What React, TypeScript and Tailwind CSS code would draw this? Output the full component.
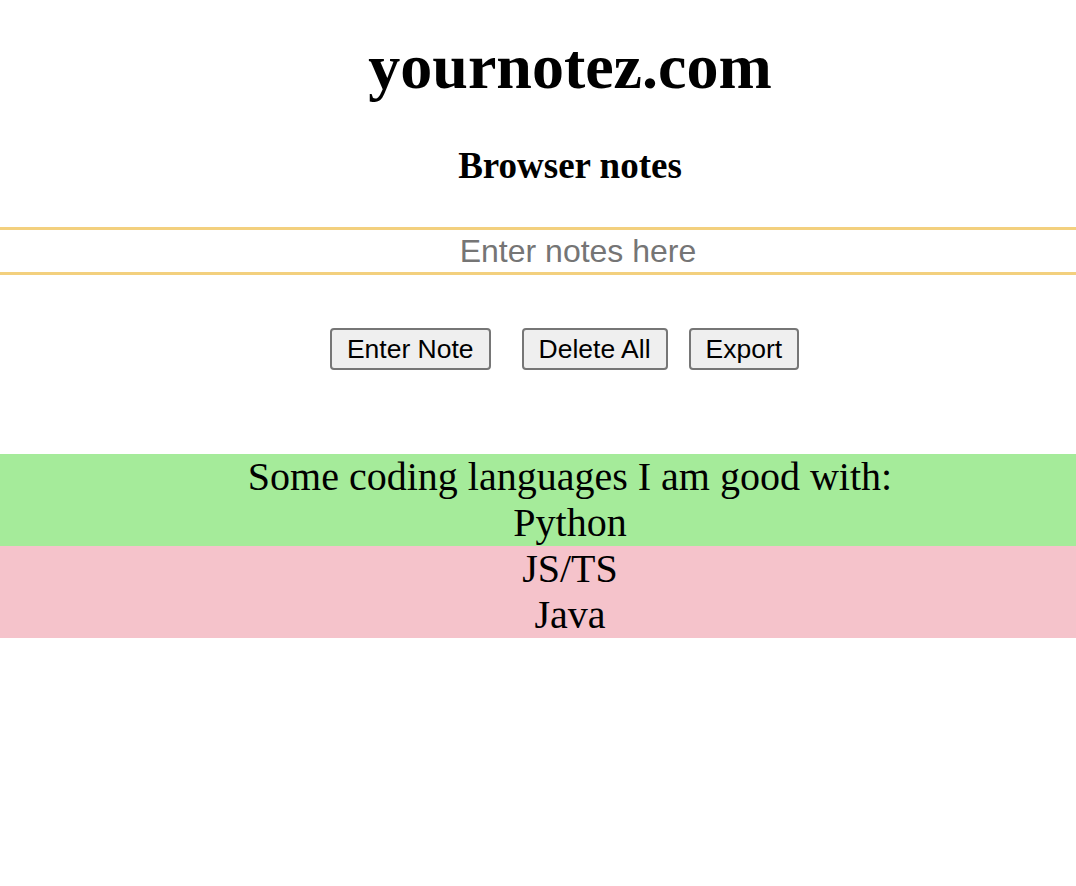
export default function App() {
  return (
    <div className="min-h-screen overflow-hidden bg-white text-black">
      <div className="w-[1140px]" style={{ fontFamily: '"Liberation Serif", "Times New Roman", serif' }}>
        <h1 className="pt-[30px] text-center text-[64px] font-bold leading-[74px]">yournotez.com</h1>
        <h2 className="mt-[40px] text-center text-[37px] font-bold leading-[43px]">Browser notes</h2>
        <div className="mt-[40px]">
          <input
            type="text"
            placeholder="Enter notes here"
            className="block h-[48px] w-full border-y-[3px] border-[#f3d07e] pl-[16px] text-center text-[32px] text-black outline-none placeholder:text-[#757575]"
            style={{ fontFamily: '"Liberation Sans", Arial, sans-serif' }}
          />
        </div>
        <div className="mt-[53px] flex justify-center pr-[11px]" style={{ fontFamily: '"Liberation Sans", Arial, sans-serif' }}>
          <button className="h-[42px] rounded-[4px] border-2 border-[#767676] bg-[#efefef] px-[15px] text-[26.5px]">Enter Note</button>
          <button className="ml-[31px] h-[42px] rounded-[4px] border-2 border-[#767676] bg-[#efefef] px-[15px] text-[26.5px]">Delete All</button>
          <button className="ml-[21px] h-[42px] rounded-[4px] border-2 border-[#767676] bg-[#efefef] px-[15px] text-[26.5px]">Export</button>
        </div>
        <div className="mt-[84px] text-center text-[40px] leading-[46px]">
          <div className="bg-[#a5eb9a]">
            <div>Some coding languages I am good with:</div>
            <div>Python</div>
          </div>
          <div className="bg-[#f5c3cb]">
            <div>JS/TS</div>
            <div>Java</div>
          </div>
        </div>
      </div>
    </div>
  );
}
